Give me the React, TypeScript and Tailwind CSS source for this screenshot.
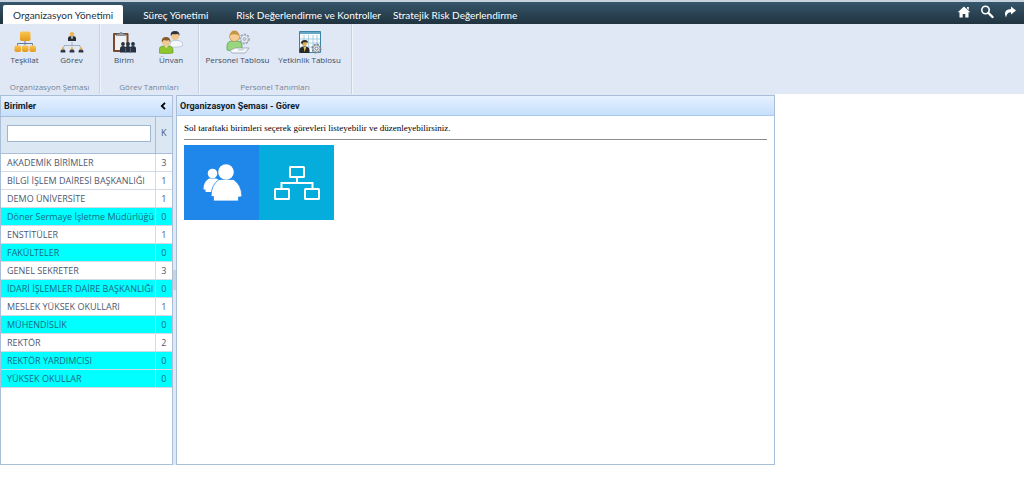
import { useState, type ReactNode } from "react";

const TABS = [
  { label: "Organizasyon Yönetimi", className: "px-[10px]" },
  { label: "Süreç Yönetimi", className: "px-5" },
  { label: "Risk Değerlendirme ve Kontroller", className: "pr-1 pl-2" },
  { label: "Stratejik Risk Değerlendirme", className: "px-2" },
];

const UNITS = [
  { name: "AKADEMİK BİRİMLER", count: 3 },
  { name: "BİLGİ İŞLEM DAİRESİ BAŞKANLIĞI", count: 1 },
  { name: "DEMO ÜNİVERSİTE", count: 1 },
  { name: "Döner Sermaye İşletme Müdürlüğü", count: 0 },
  { name: "ENSTİTÜLER", count: 1 },
  { name: "FAKÜLTELER", count: 0 },
  { name: "GENEL SEKRETER", count: 3 },
  { name: "İDARİ İŞLEMLER DAİRE BAŞKANLIĞI", count: 0 },
  { name: "MESLEK YÜKSEK OKULLARI", count: 1 },
  { name: "MÜHENDİSLİK", count: 0 },
  { name: "REKTÖR", count: 2 },
  { name: "REKTÖR YARDIMCISI", count: 0 },
  { name: "YÜKSEK OKULLAR", count: 0 },
];

function OrgIcon() {
  return (
    <svg viewBox="0 0 24 24" className="size-6">
      <defs>
        <linearGradient id="amber" x2="0" y2="1">
          <stop stopColor="#fbc650" />
          <stop offset="1" stopColor="#e39a1c" />
        </linearGradient>
      </defs>
      <path d="M12 11v4M4.500 15.500v-2h15v2" fill="none" stroke="#66799b" />
      <rect x="7" y="1.500" width="10.500" height="9.500" rx="1.800" fill="url(#amber)" />
      <rect x="1.500" y="15.500" width="6.500" height="6.500" rx="1.800" fill="url(#amber)" />
      <rect x="9" y="15.500" width="6.500" height="6.500" rx="1.800" fill="url(#amber)" />
      <rect x="16.500" y="15.500" width="6.500" height="6.500" rx="1.800" fill="url(#amber)" />
    </svg>
  );
}

function TaskIcon() {
  return (
    <svg viewBox="0 0 24 24" className="size-6">
      <path d="M12 12v4M4 17v-1.500h16V17" fill="none" stroke="#8fa0b5" strokeWidth=".8" />
      <circle cx="12" cy="4.200" r="2.200" fill="#efb44d" />
      <path d="M8 11V8.300q0-2 2-2h4q2 0 2 2V11z" fill="#282d38" />
      <path d="m11 6.500 1 3 1-3z" fill="#fff" />
      {[3, 12, 21].map(x => (
        <g key={x}>
          <circle cx={x} cy="18.300" r="1.200" fill="#edb04a" />
          <path d={`M${x - 2.4} 22.500v-1.500q0-1.400 2.400-1.400t2.400 1.400v1.500z`} fill="#343845" />
        </g>
      ))}
    </svg>
  );
}

function ClipboardIcon() {
  return (
    <svg viewBox="0 0 24 24" className="size-6">
      <rect x="1" y="3" width="15.500" height="19" rx="1" fill="#7c4a2b" />
      <path d="M3 5h11.500v12l-3 3H3z" fill="#eff1f4" />
      <path d="M4.500 5.500V3.800H7q2-3 4 0h2.500v1.700z" fill="#929ba5" stroke="#555e68" strokeWidth=".5" />
      {[11, 16, 21].map(x => (
        <g key={x} fill="#263142">
          <circle cx={x} cy="14" r="1.900" />
          <path d={`M${x - 3} 22.500v-4q0-2.500 3-2.500t3 2.500v4z`} />
        </g>
      ))}
      <path d="M13.500 18v4.500M18.500 18v4.500" stroke="#8a97ab" strokeWidth=".5" />
    </svg>
  );
}

function PeopleIcon() {
  return (
    <svg viewBox="0 0 24 24" className="size-6">
      <path d="M11 17v-3q0-3 3.500-3.500h4.500q4.500.5 4.500 4V16q-5 2-12.500 1z" fill="#f5f8fb" stroke="#a2b4c8" strokeWidth=".6" />
      <circle cx="16" cy="6" r="4" fill="#efc690" />
      <path d="M11.800 6Q11 1 16 1q5 0 4.400 5L19 3.800q-3 1-5.500.2z" fill="#30343a" />
      <path d="M0 23v-3q0-4 5-4h4q5 0 5 4v3q-7 1.500-14 0z" fill="#90c52d" stroke="#5d9321" strokeWidth=".6" />
      <circle cx="7" cy="12" r="4" fill="#efc994" />
      <path d="M2.800 12.500Q2 7 7 7t4.300 5.500L9.800 10q-3 1-5 .1z" fill="#875c2b" />
      <path d="m5.500 16 1.800 2 1.800-2" fill="#f8e3c4" />
    </svg>
  );
}

function PersonnelIcon() {
  return (
    <svg viewBox="0 0 24 24" className="size-6">
      <circle cx="18.500" cy="9" r="4.300" fill="#f5f7fa" stroke="#9ba8b8" strokeWidth="2.200" strokeDasharray="2 1.200" />
      <circle cx="18.500" cy="9" r="3.700" fill="#f7f9fc" stroke="#a0acbb" strokeWidth=".8" />
      <circle cx="18.500" cy="9" r="1.600" fill="#cbd4df" stroke="#8896a8" strokeWidth=".7" />
      <path d="M1 20v-4q0-5 5.500-5h4q5.500 0 5.500 5v4q-7 2-15 0z" fill="#99d67d" stroke="#4d9b46" strokeWidth=".7" />
      <circle cx="8.500" cy="6.500" r="5" fill="#f3cd92" stroke="#bd843b" strokeWidth=".6" />
      <path d="M4 5.500q.5-5 4.500-5t4.500 5Q8 3 4 5.500z" fill="#c89445" />
      <path d="m4 20.500 5-2.500h14l-4 5H6z" fill="#f7f9fc" stroke="#8796aa" strokeWidth=".7" />
      <path d="m12 20 6-.2" stroke="#98a7b9" strokeWidth=".7" />
    </svg>
  );
}

function CompetenceIcon() {
  return (
    <svg viewBox="0 0 24 24" className="size-6">
      <path d="M1.500 1.500h21v21h-21z" fill="#f9fcff" stroke="#3885a5" />
      <path d="M2 2h20v2H2z" fill="#67a9c4" />
      <path d="M2 9h20M2 13h20M2 17h20M6 5v17M10.500 5v17M15 5v17M19 5v17" stroke="#9bc6da" strokeWidth=".8" />
      <circle cx="6.500" cy="13.500" r="2.500" fill="#e4b055" />
      <path d="M3 13q0-3 4-3 3 0 3 2.500-3-.5-5 0l-.5 2z" fill="#2e2c2b" />
      <path d="M1.500 23v-3q0-3.500 5-3.500t5 3.500v3z" fill="#26282b" />
      <path d="m5.500 17 1.200 5 1.500-5z" fill="#e6c359" />
      <circle cx="18.500" cy="18.500" r="4" fill="#dce1e6" stroke="#767f89" strokeWidth="2" strokeDasharray="1.900 1.200" />
      <circle cx="18.500" cy="18.500" r="3.500" fill="#e4e7eb" stroke="#808b97" strokeWidth=".7" />
      <circle cx="18.500" cy="18.500" r="1.500" fill="#fff" stroke="#727d8a" />
    </svg>
  );
}

function RibbonGroup({ title, className, children }: { title: string; className: string; children: ReactNode }) {
  return (
    <section className={`flex flex-col justify-between border-r border-[#c5d2e2] pt-[6px] pb-px shadow-[1px_0_0_#f0f5fb] ${className}`}>
      <div className="flex justify-center pr-[3px]">{children}</div>
      <h2 className="text-center text-[8px] leading-[12px] text-[#758398]">{title}</h2>
    </section>
  );
}

function RibbonButton({ label, icon, wide }: { label: string; icon: ReactNode; wide?: boolean }) {
  return (
    <button className={`flex flex-col items-center whitespace-nowrap text-[8px] leading-[12px] text-[#3d4d65] ${wide ? "w-[72px]" : "w-[47px]"}`}>
      {icon}
      <span>{label}</span>
    </button>
  );
}

export default function App() {
  const [activeTab, setActiveTab] = useState(0);
  const [filter, setFilter] = useState("");
  const units = UNITS.filter(u => u.name.toLocaleLowerCase("tr").includes(filter.toLocaleLowerCase("tr")));

  return (
    <div className="min-h-screen bg-white font-['Open_Sans',sans-serif]">
      <header className="flex h-6 items-end justify-between border-t-2 border-[#c8d3e0] bg-linear-to-b from-[#36566b] to-[#20333f] pl-[3px]">
        <nav className="flex items-end font-['Lato',sans-serif]">
          {TABS.map((tab, i) => (
            <button
              key={tab.label}
              onClick={() => setActiveTab(i)}
              className={`h-[19px] rounded-t-[2px] text-[10px] leading-[20px] whitespace-nowrap ${tab.className} ${i === activeTab ? "bg-white text-[#26313d]" : "text-white"}`}
            >
              {tab.label}
            </button>
          ))}
        </nav>
        <div className="flex h-full items-center gap-[9px] pr-[7px] pb-[3px] text-white">
          <button aria-label="Ana sayfa">
            <svg viewBox="0 0 14 14" className="size-[14px]" fill="currentColor">
              <path d="m7 1.500 6.300 5.800H11.500V12.500H8.300V9H5.700v3.500H2.500V7.300H.7zM10 2h1.800v3L10 3.500z" />
            </svg>
          </button>
          <button aria-label="Ara">
            <svg viewBox="0 0 14 14" className="size-[14px]" fill="none" stroke="currentColor">
              <circle cx="5.500" cy="5" r="3.700" strokeWidth="1.600" />
              <path d="m8.500 8 4 4" strokeWidth="2.400" strokeLinecap="round" />
            </svg>
          </button>
          <button aria-label="Çıkış">
            <svg viewBox="0 0 14 14" className="size-[14px]" fill="currentColor">
              <path d="M8 1.500 13 5.500 8 9.500V7.200Q4 7 3 12.500-.5 4.500 8 4z" />
            </svg>
          </button>
        </div>
      </header>

      <div className="flex h-[70px] bg-[#dfe8f4]">
        <RibbonGroup title="Organizasyon Şeması" className="w-[100px]">
          <RibbonButton label="Teşkilat" icon={<OrgIcon />} />
          <RibbonButton label="Görev" icon={<TaskIcon />} />
        </RibbonGroup>
        <RibbonGroup title="Görev Tanımları" className="w-[99px]">
          <RibbonButton label="Birim" icon={<ClipboardIcon />} />
          <RibbonButton label="Ünvan" icon={<PeopleIcon />} />
        </RibbonGroup>
        <RibbonGroup title="Personel Tanımları" className="w-[153px]">
          <RibbonButton label="Personel Tablosu" icon={<PersonnelIcon />} wide />
          <RibbonButton label="Yetkinlik Tablosu" icon={<CompetenceIcon />} wide />
        </RibbonGroup>
      </div>

      <main className="flex w-[calc(75%+7px)] min-w-[600px] items-stretch bg-[#dfe8f4] pt-px">
        <aside className="flex min-h-[370px] w-[173px] shrink-0 flex-col border border-[#a9bfd9] bg-white">
          <div className="flex h-5 items-center justify-between bg-linear-to-b from-[#e6f1ff] to-[#c6dffc] px-[3px]">
            <h2 className="font-['Roboto',sans-serif] text-[9px] leading-5 font-bold text-[#111d2c]">Birimler</h2>
            <button aria-label="Daralt" className="pr-[3px]">
              <svg viewBox="0 0 6 8" className="h-2 w-[6px]" fill="none" stroke="#000" strokeWidth="1.800">
                <path d="M5 .8 1.800 4 5 7.200" />
              </svg>
            </button>
          </div>
          <table className="w-full table-fixed border-collapse text-[9px] leading-[12px] text-[#4d5870]">
            <colgroup>
              <col />
              <col className="w-[17px]" />
            </colgroup>
            <thead className="bg-[#dce7f4]">
              <tr className="h-[37px] border-y border-[#a9bfd9]">
                <th className="border-r border-[#a9bfd9] pr-1 pb-1 pl-[6px] font-normal">
                  <input
                    aria-label="Birim ara"
                    value={filter}
                    onChange={e => setFilter(e.target.value)}
                    className="block h-[17px] w-full border border-[#9fb6d2] bg-white px-1 outline-none"
                  />
                </th>
                <th className="pb-1 font-normal">K</th>
              </tr>
            </thead>
            <tbody>
              {units.map(unit => (
                <tr key={unit.name} className={`h-[18px] border-b border-[#d3dbe5] ${unit.count === 0 ? "bg-[#00ffff] text-[#196b80]" : ""}`}>
                  <td className="overflow-hidden border-r border-[#d3dbe5] pl-[6px] whitespace-nowrap">{unit.name}</td>
                  <td className="text-center">{unit.count}</td>
                </tr>
              ))}
            </tbody>
          </table>
        </aside>

        <div className="flex w-[3px] shrink-0 items-center">
          <span className="h-5 w-full bg-[#c9d3df]" />
        </div>

        <section className="min-w-0 flex-1 border border-[#a9bfd9] bg-white">
          <h1 className="h-5 border-b border-[#a9c8ec] bg-linear-to-b from-[#e6f1ff] to-[#c6dffc] px-[3px] font-['Roboto',sans-serif] text-[9px] leading-5 font-bold text-[#111d2c]">
            Organizasyon Şeması - Görev
          </h1>
          <div className="px-[7px] pt-[6px]">
            <p className="border-b border-[#8c8c8c] pb-[5px] font-['Liberation_Serif',serif] text-[9px] leading-[12px] text-black">
              Sol taraftaki birimleri seçerek görevleri listeyebilir ve düzenleyebilirsiniz.
            </p>
            <div className="mt-[5px] flex">
              <button aria-label="Görevler" className="flex size-[75px] items-center justify-center bg-[#1f86ea]">
                <svg viewBox="0 0 40 38" className="h-[38px] w-10" fill="#fff">
                  <circle cx="10.500" cy="9.500" r="4.800" />
                  <path d="M3.500 28v-2.500H1.500Q1 18.500 7 14.500h7q4 1 5 5V28z" />
                  <path d="M11.500 37v-4.500H9Q9 21 17 15.500h14.500Q39.500 21 39.800 31.500L39 33h-2.500v4z" stroke="#1f86ea" strokeWidth=".8" />
                  <circle cx="24" cy="8" r="7.800" />
                </svg>
              </button>
              <button aria-label="Şema" className="flex size-[75px] items-center justify-center bg-[#05addc]">
                <svg viewBox="0 0 48 36" className="h-9 w-12" fill="none" stroke="#fff" strokeWidth="2">
                  <rect x="17" y="2" width="14" height="10" rx=".5" />
                  <rect x="2" y="24" width="14" height="10" rx=".5" />
                  <rect x="32" y="24" width="14" height="10" rx=".5" />
                  <path d="M24 12v6M8.500 24v-6h31v6" />
                </svg>
              </button>
            </div>
          </div>
        </section>
      </main>
    </div>
  );
}
